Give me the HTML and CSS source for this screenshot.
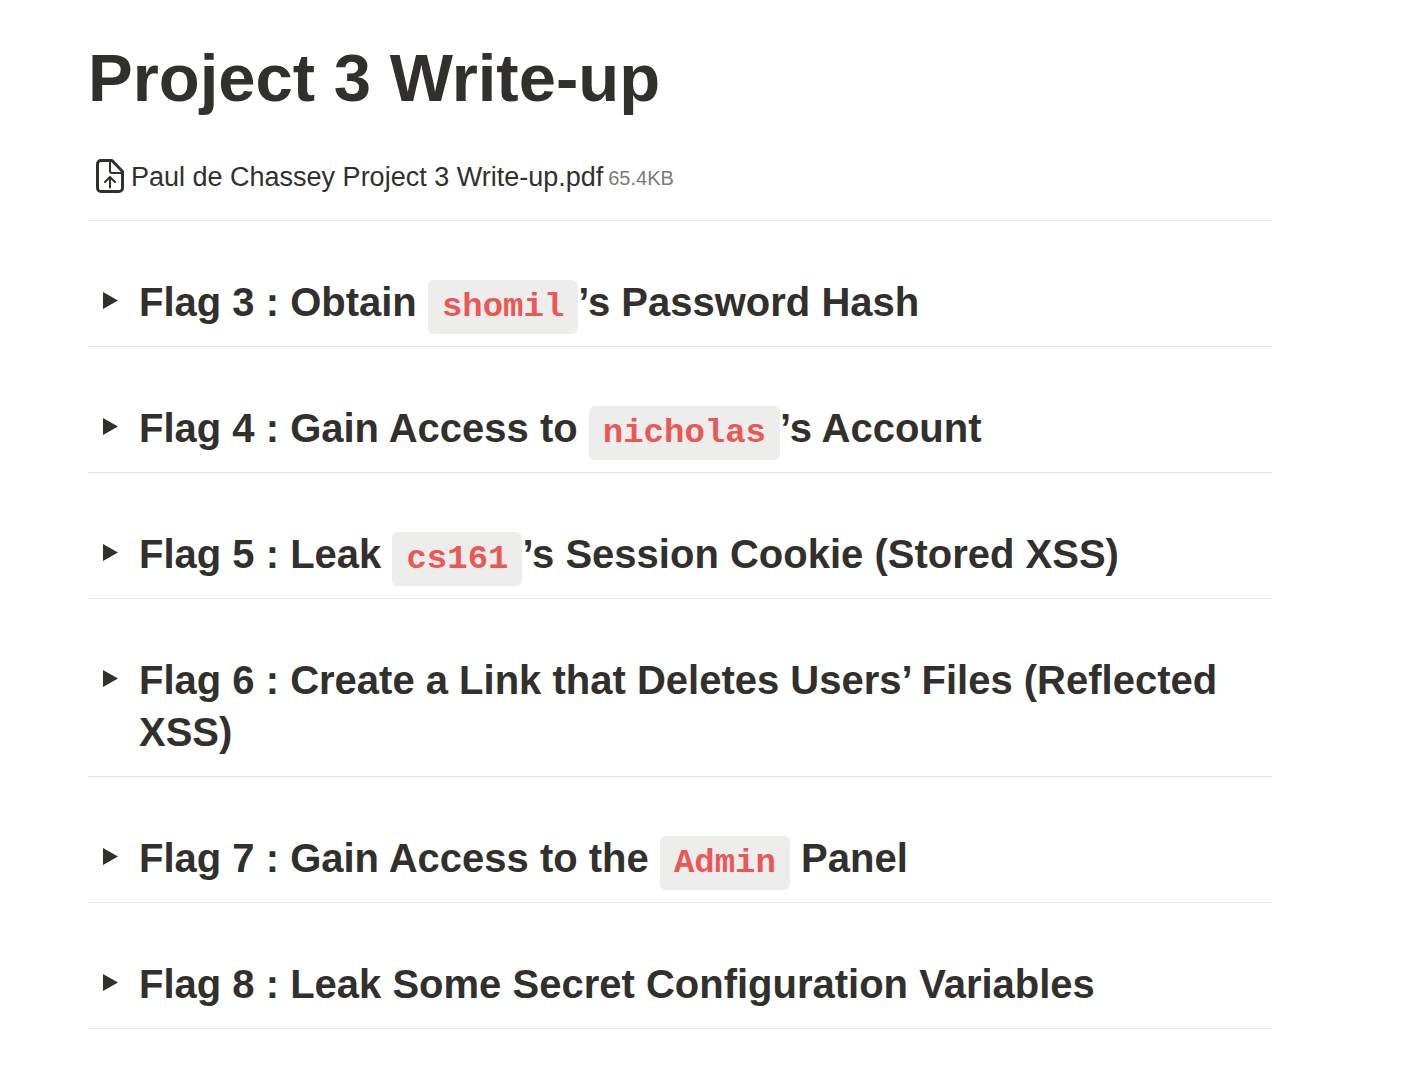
FILE: index.html
```html
<!DOCTYPE html>
<html lang="en">
<head>
<meta charset="utf-8">
<title>Project 3 Write-up</title>
<meta name="viewport" content="width=device-width, initial-scale=1">
<link rel="stylesheet" href="styles.css">
</head>
<body>
<main class="page">
  <h1 class="title">Project 3 Write-up</h1>
  <a class="file" href="#">
    <svg class="file-icon" viewBox="0 0 28 34" aria-hidden="true"><path d="M5 1.500H16L26.500 12.500V29a3.500 3.500 0 0 1-3.500 3.500H5A3.500 3.500 0 0 1 1.500 29V5A3.500 3.500 0 0 1 5 1.500z"/><path class="fine" d="M14 2v10a2 2 0 0 0 2 2h10M14 28.500V18.500M9 23l5-5 5 5"/></svg>
    <span class="file-name">Paul de Chassey Project 3 Write-up.pdf</span>
    <span class="file-size">65.4KB</span>
  </a>
  <details class="flag"><summary class="flag-head"><svg class="arrow" viewBox="0 0 15 17" aria-hidden="true"><path d="M0 0v17l15-8.500z"/></svg><h2 class="flag-title">Flag 3 : Obtain <code class="code">shomil</code>’s Password Hash</h2></summary></details>
  <details class="flag"><summary class="flag-head"><svg class="arrow" viewBox="0 0 15 17" aria-hidden="true"><path d="M0 0v17l15-8.500z"/></svg><h2 class="flag-title">Flag 4 : Gain Access to <code class="code">nicholas</code>’s Account</h2></summary></details>
  <details class="flag"><summary class="flag-head"><svg class="arrow" viewBox="0 0 15 17" aria-hidden="true"><path d="M0 0v17l15-8.500z"/></svg><h2 class="flag-title">Flag 5 : Leak <code class="code">cs161</code>’s Session Cookie (Stored XSS)</h2></summary></details>
  <details class="flag"><summary class="flag-head"><svg class="arrow" viewBox="0 0 15 17" aria-hidden="true"><path d="M0 0v17l15-8.500z"/></svg><h2 class="flag-title">Flag 6 : Create a Link that Deletes Users’ Files (Reflected XSS)</h2></summary></details>
  <details class="flag"><summary class="flag-head"><svg class="arrow" viewBox="0 0 15 17" aria-hidden="true"><path d="M0 0v17l15-8.500z"/></svg><h2 class="flag-title">Flag 7 : Gain Access to the <code class="code">Admin</code> Panel</h2></summary></details>
  <details class="flag"><summary class="flag-head"><svg class="arrow" viewBox="0 0 15 17" aria-hidden="true"><path d="M0 0v17l15-8.500z"/></svg><h2 class="flag-title">Flag 8 : Leak Some Secret Configuration Variables</h2></summary></details>
</main>
</body>
</html>
```
FILE: styles.css
```css
* { box-sizing: border-box; }
body {
  margin: 0;
  background: #fff;
  color: #32302c;
  font-family: "Liberation Sans", Arial, sans-serif;
}
.page { padding: 38px 139px 54px 88px; }
.title {
  margin: 0;
  font-size: 67px;
  line-height: 80px;
  font-weight: 700;
}
.file {
  display: flex;
  align-items: center;
  height: 103px;
  padding: 13px 8px 0;
  border-bottom: 1px solid #e3e3e1;
  color: inherit;
  text-decoration: none;
}
.file-icon {
  width: 28px;
  height: 34px;
  margin-right: 7px;
  fill: none;
  stroke: currentColor;
  stroke-width: 3;
  stroke-linecap: round;
  stroke-linejoin: round;
}
.fine { stroke-width: 2; }
.file-name {
  padding-top: 2px;
  font-size: 27px;
  line-height: 40px;
}
.file-size {
  margin-left: 5px;
  padding-top: 6px;
  color: #7c7b78;
  font-size: 20px;
}
.flag { border-bottom: 1px solid #e3e3e1; }
.flag-head {
  display: flex;
  align-items: flex-start;
  padding: 55px 15px 18px;
  list-style: none;
  cursor: pointer;
}
.flag-head::-webkit-details-marker { display: none; }
.arrow {
  flex: none;
  width: 15px;
  height: 17px;
  margin: 16px 21px 0 0;
  fill: currentColor;
}
.flag-title {
  margin: 0;
  font-size: 40px;
  line-height: 52px;
  font-weight: 700;
}
.code {
  padding: 8px 14px;
  border-radius: 6px;
  background: #ededeb;
  color: #eb5757;
  font-family: "Liberation Mono", "Courier New", monospace;
  font-size: 34px;
  line-height: 1;
}
```
